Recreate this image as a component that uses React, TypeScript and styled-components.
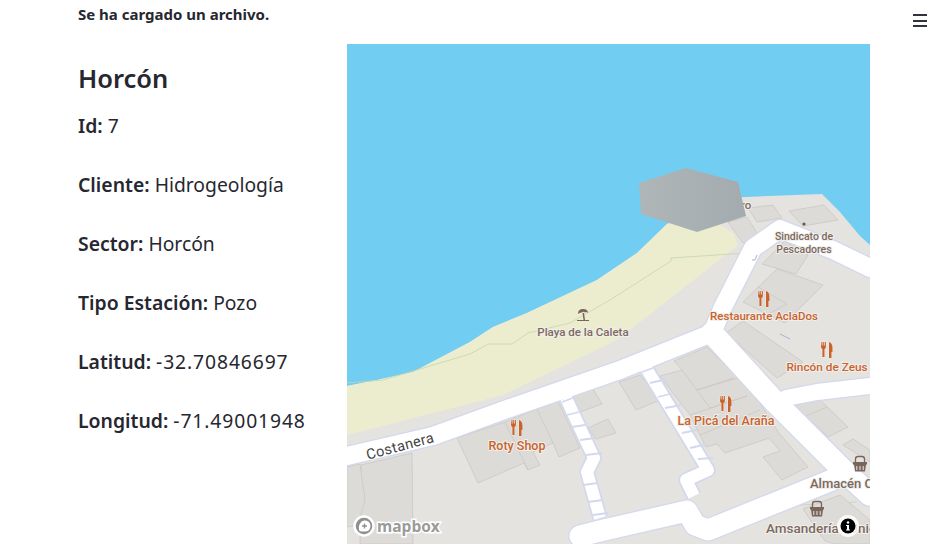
import styled, { createGlobalStyle } from "styled-components"

const GlobalStyle = createGlobalStyle`
    html, body {
        margin: 0;
        padding: 0;
        background: #fff;
        font-family: "Noto Sans", Roboto, sans-serif;
        color: #262730;
    }
`

const Page = styled.div`
    display: flex;
    align-items: flex-start;
    width: 952px;
    height: 555px;
    overflow: hidden;
`

const Main = styled.main`
    width: 792px;
    margin-left: 78px;
    flex-shrink: 0;
`

const Notice = styled.p`
    margin: -1px 0 1px;
    height: 44px;
    padding-top: 5px;
    box-sizing: border-box;
    font-size: 15px;
    line-height: 20px;
    font-weight: 700;
`

const Columns = styled.div`
    display: flex;
    align-items: flex-start;
`

const Details = styled.section`
    width: 269px;
    flex-shrink: 0;
`

const Title = styled.h2`
    margin: 15px 0 14px;
    font-size: 25.5px;
    line-height: 38px;
    font-weight: 600;
`

const Field = styled.p`
    margin: 0 0 29px;
    font-size: 19.3px;
    line-height: 30px;
    white-space: nowrap;
`

const Label = styled.span`
    font-size: 19.4px;
    font-weight: 600;
`

const Value = styled.span<{ $numeric?: boolean }>`
    letter-spacing: ${p => (p.$numeric ? "0.9px" : "0")};
`

const MapFrame = styled.svg`
    display: block;
    width: 523px;
    height: 500px;
    flex-shrink: 0;
`

const MenuButton = styled.button`
    display: flex;
    flex-direction: column;
    gap: 3.5px;
    margin: 14px 0 0 43px;
    padding: 0;
    width: 14px;
    border: 0;
    background: none;
`

const MenuLine = styled.span`
    display: block;
    width: 14px;
    height: 2px;
    background: #31333f;
`

const Poi = styled.text<{ $accent?: boolean; $size?: number; $start?: boolean }>`
    font-family: Roboto, "Noto Sans", sans-serif;
    font-size: ${p => p.$size ?? 11.5}px;
    font-weight: 500;
    text-anchor: ${p => (p.$start ? "start" : "middle")};
    fill: ${p => (p.$accent ? "#c9632c" : "#7d6a5e")};
    stroke: #f0efec;
    stroke-width: 2px;
    paint-order: stroke;
`

const RoadName = styled.text`
    font-family: Roboto, "Noto Sans", sans-serif;
    font-size: 14.5px;
    letter-spacing: 0.4px;
    text-anchor: middle;
    fill: #444;
    stroke: #fff;
    stroke-width: 2px;
    paint-order: stroke;
`

const LogoText = styled.text`
    font-family: "Open Sans", "Noto Sans", sans-serif;
    font-size: 15.5px;
    font-weight: 700;
    fill: #9a9a9a;
    stroke: #fff;
    stroke-width: 3px;
    paint-order: stroke;
`

const fields = [
    { label: "Id", value: "7" },
    { label: "Cliente", value: "Hidrogeología" },
    { label: "Sector", value: "Horcón" },
    { label: "Tipo Estación", value: "Pozo" },
    { label: "Latitud", value: "-32.70846697", numeric: true },
    { label: "Longitud", value: "-71.49001948", numeric: true },
]

const coast = "347,386 377,380 413,372 470,342 493,327 527,313 597,280 637,253 667,224"

const buildings = [
    "728,222 743,243 761,239 747,217",
    "748,208 773,205 782,218 757,222",
    "789,211 824,205 838,220 803,226",
    "785,241 808,255 796,274 762,264",
    "777,269 823,285 785,323 743,302",
    "726,333 743,321 803,362 777,378",
    "660,376 682,370 674,361 707,347 740,380 760,403 779,433 808,467 782,480 763,457 780,451 769,438 725,453 717,444 706,447 690,415",
    "619,382 640,375 660,400 636,410",
    "588,428 608,419 616,433 596,439",
    "572,394 593,389 602,404 580,412",
    "457,438 505,422 537,409 558,401 580,448 559,457 553,443 533,452 540,465 528,470 524,463 478,483",
    "361,465 412,453 413,544 360,544",
    "347,467 360,464 365,500 358,525 347,527",
    "793,404 817,397 848,427 828,437",
    "843,445 853,439 870,450 870,462",
    "803,509 840,495 870,520 870,544 835,544 825,541",
]

const buildingLines = [
    "758,372 697,390",
    "682,370 697,390 733,378",
    "697,390 710,408 747,396",
    "690,415 747,396",
    "700,435 760,410",
    "505,422 528,470",
    "537,409 553,443",
    "806,416 827,407",
    "758,287 787,304 770,313",
]

const trails = [
    "347,383 383,380 470,354 488,344 512,344 528,333 570,323 610,300 671,261 671,258 747,253",
    "600,540 687,523",
    "800,505 857,502",
]

const roads = [
    { points: "347,456 433,436 510,408 620,370 712,333 723,307 753,248 780,229 833,250 870,268", width: 18 },
    { points: "712,333 776,403 846,473 870,495", width: 22 },
    { points: "786,398 817,392 870,386", width: 16 },
    { points: "580,536 604,530 687,511 695,525 708,530 832,480", width: 21 },
]

const paths = [
    { points: "566,398 594,458 587,472 600,518" },
    { points: "646,368 708,470 686,480 694,496" },
]

const crossings = [
    "562,402 573,398", "567,415 579,412", "572,427 585,425", "580,440 595,438",
    "586,455 602,453", "583,485 598,483", "588,502 603,500", "593,515 608,513",
    "642,372 653,368", "650,383 667,379", "658,397 674,393", "665,408 682,405",
    "682,433 697,430", "690,448 707,444", "698,459 713,458",
]

function Cutlery({ x, y }: { x: number; y: number }) {
    return (
        <g transform={`translate(${x} ${y})`} fill="#c9632c" stroke="#f0efec" strokeWidth="1" paintOrder="stroke">
            <path d="M-5.500 -8 h1 v3.500 h.7 v-3.500 h1 v3.500 h.7 v-3.500 h1 v5 q0 1.500 -1.400 2 v8 h-2.100 v-8 q-1.400 -.5 -1.400 -2 z" />
            <path d="M2 8 v-16 q3.500 1 3.500 6 v4 h-1 v6 z" />
        </g>
    )
}

function Basket({ x, y }: { x: number; y: number }) {
    return (
        <g transform={`translate(${x} ${y})`}>
            <path d="M-4.500 -1 v-4 q0 -2.500 2.500 -2.500 h4 q2.500 0 2.500 2.500 v4" fill="none" stroke="#7a655a" strokeWidth="1.3" />
            <path d="M-7 -2 h14 v2.500 h-1 l-1 7 h-10 l-1 -7 h-1 z" fill="#7a655a" />
            <path d="M-3.200 2 v4 M0 2 v4 M3.200 2 v4" stroke="#eceae6" strokeWidth="1" />
        </g>
    )
}

function Palm({ x, y }: { x: number; y: number }) {
    return (
        <g transform={`translate(${x} ${y})`} fill="#7a655a">
            <path d="M-5 -1 q0 -5 5 -5 q5 0 5 4 q-2 -1.500 -3 -.5 q-2 -1.500 -3 0 q-2 -.5 -4 1.500 z" />
            <path d="M-.5 -2 h1.500 l1 7 h-1.500 z" />
            <path d="M-6 5 h12 v1 h-12 z" />
        </g>
    )
}

function MapView() {
    return (
        <MapFrame viewBox="347 44 523 500">
            <defs>
                <linearGradient id="zone" x1="0" x2="1" y1="0" y2="0">
                    <stop offset="0" stopColor="#aeb6b8" />
                    <stop offset="1" stopColor="#a3abae" />
                </linearGradient>
            </defs>
            <rect x="347" y="44" width="523" height="500" fill="#72cdf2" />
            <polygon
                points={`${coast} 700,200 745,197 822,194 840,212 860,236 870,245 870,544 347,544`}
                fill="#e4e3e0"
            />
            <polygon
                points={`${coast} 720,225 733,233 738,245 700,275 617,340 503,395 347,435`}
                fill="#ecedcf"
            />
            {trails.map(points => (
                <polyline key={points} points={points} fill="none" stroke="#c5d6a8" strokeWidth="0.8" />
            ))}

            {buildings.map(points => (
                <polygon key={points} points={points} fill="#dddbd8" stroke="#cbc8c3" strokeWidth="0.8" />
            ))}
            {buildingLines.map(points => (
                <polyline key={points} points={points} fill="none" stroke="#cbc8c3" strokeWidth="0.8" />
            ))}

            {paths.map(p => (
                <polyline key={p.points} points={p.points} fill="none" stroke="#d3d9ec" strokeWidth="15.5" strokeLinejoin="round" />
            ))}
            {roads.map(r => (
                <polyline key={r.points} points={r.points} fill="none" stroke="#d3d9ec" strokeWidth={r.width + 2.5} strokeLinejoin="round" strokeLinecap="round" />
            ))}
            {paths.map(p => (
                <polyline key={p.points} points={p.points} fill="none" stroke="#fff" strokeWidth="12" strokeLinejoin="round" />
            ))}
            {crossings.map(points => (
                <polyline key={points} points={points} fill="none" stroke="#d3d9ec" strokeWidth="1.8" />
            ))}
            {roads.map(r => (
                <polyline key={r.points} points={r.points} fill="none" stroke="#fff" strokeWidth={r.width} strokeLinejoin="round" strokeLinecap="round" />
            ))}

            <path d="M757 255 l-2 5 h-3 M780 334 l10 5" fill="none" stroke="#aab3cf" strokeWidth="1" />

            <Poi x="746" y="209">ro</Poi>
            <polygon points="639,183 686,168 738,182 746,216 697,232 641,214" fill="url(#zone)" />

            <RoadName transform="translate(400 446) rotate(-15)" x="0" y="5">Costanera</RoadName>

            <circle cx="804" cy="224" r="1.6" fill="#6a5548" />
            <Poi x="804" y="240" $size={10.5}>Sindicato de</Poi>
            <Poi x="804" y="253" $size={10.5}>Pescadores</Poi>
            <Palm x={583} y={315} />
            <Poi x="583" y="336">Playa de la Caleta</Poi>
            <Cutlery x={764} y={299} />
            <Poi $accent x="764" y="320">Restaurante AclaDos</Poi>
            <Cutlery x={827} y={350} />
            <Poi $accent x="827" y="371" $size={11.8}>Rincón de Zeus</Poi>
            <Cutlery x={726} y={404} />
            <Poi $accent x="726" y="425" $size={12.5}>La Picá del Araña</Poi>
            <Cutlery x={517} y={428} />
            <Poi $accent x="517" y="450" $size={12.5}>Roty Shop</Poi>
            <Basket x={860} y={464} />
            <Poi x="810" y="488" $size={13} $start>Almacén Costa</Poi>
            <Basket x={817} y={509} />
            <Poi x="766" y="533" $size={13.5} $start wordSpacing="7">Amsandería Unión</Poi>

            <circle cx="364" cy="526" r="9.500" fill="#8f8f8f" stroke="#fff" strokeWidth="2.500" />
            <path d="M359.500 531 q-1.500 -4 .5 -7.500 a5.500 5.500 0 1 1 4.500 8 q-3 0 -5 -.5 z" fill="#fff" />
            <path d="M364.500 523.500 v5 M362 526 h5" stroke="#8f8f8f" strokeWidth="1.300" />
            <LogoText x="377" y="532">mapbox</LogoText>

            <circle cx="848" cy="526" r="11" fill="#fff" fillOpacity="0.85" />
            <circle cx="848" cy="526" r="7.500" fill="#000" />
            <circle cx="848" cy="522.500" r="1.200" fill="#fff" />
            <path d="M846 525 h3 v4.500 h1 v1 h-4 v-1 h1 v-3.500 h-1 z" fill="#fff" />
        </MapFrame>
    )
}

export default function App() {
    return (
        <Page>
            <GlobalStyle />
            <Main>
                <Notice>Se ha cargado un archivo.</Notice>
                <Columns>
                    <Details>
                        <Title>Horcón</Title>
                        {fields.map(f => (
                            <Field key={f.label}>
                                <Label>{f.label}:</Label> <Value $numeric={f.numeric}>{f.value}</Value>
                            </Field>
                        ))}
                    </Details>
                    <MapView />
                </Columns>
            </Main>
            <MenuButton aria-label="Menu">
                <MenuLine />
                <MenuLine />
                <MenuLine />
            </MenuButton>
        </Page>
    )
}
